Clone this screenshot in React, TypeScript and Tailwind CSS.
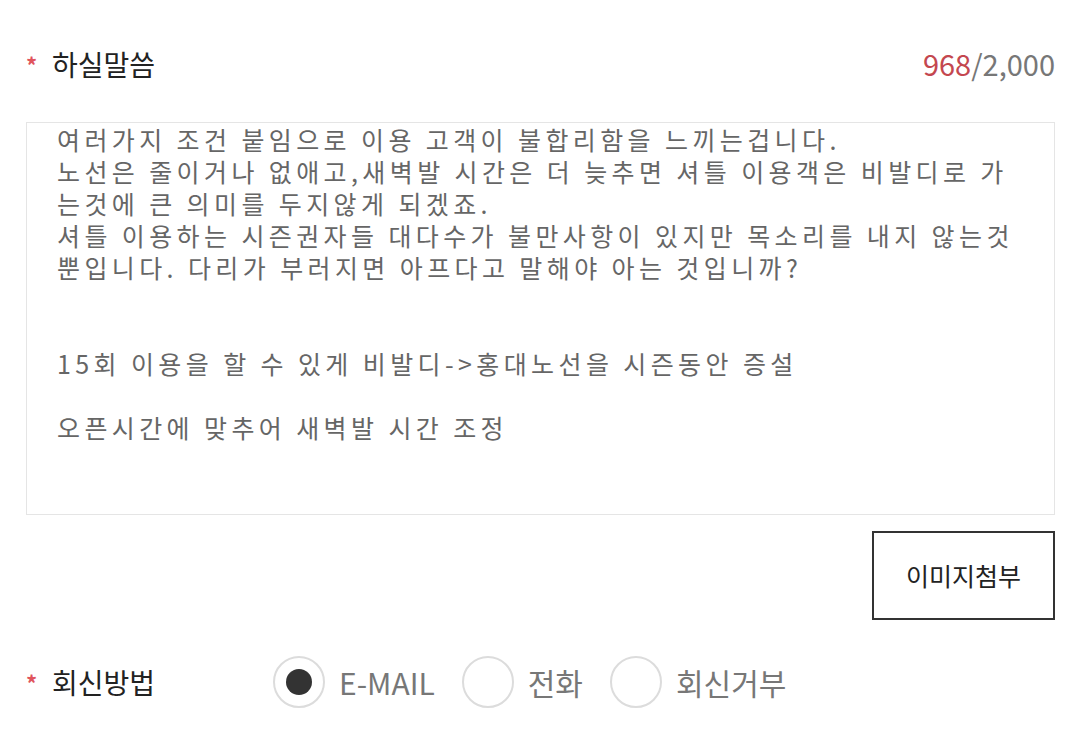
const lines = [
  "여러가지 조건 붙임으로 이용 고객이 불합리함을 느끼는겁니다.",
  "노선은 줄이거나 없애고,새벽발 시간은 더 늦추면 셔틀 이용객은 비발디로 가",
  "는것에 큰 의미를 두지않게 되겠죠.",
  "셔틀 이용하는 시즌권자들 대다수가 불만사항이 있지만 목소리를 내지 않는것",
  "뿐입니다. 다리가 부러지면 아프다고 말해야 아는 것입니까?",
  "",
  "",
  "15회 이용을 할 수 있게 비발디->홍대노선을 시즌동안 증설",
  "",
  "오픈시간에 맞추어 새벽발 시간 조정",
];

function Radio({ label, checked }: { label: string; checked?: boolean }) {
  return (
    <label className="flex items-center">
      <span className="w-[52px] h-[52px] rounded-full border-2 border-[#dcdcdc] flex items-center justify-center">
        {checked && <span className="w-[26px] h-[26px] rounded-full bg-[#333]" />}
      </span>
      <span className="ml-[14px] mr-[27px] text-[30px] text-[#777]">{label}</span>
    </label>
  );
}

export default function App() {
  return (
    <div
      className="w-[1079px] h-[738px] bg-white overflow-hidden pl-[26px] pr-[24px] pt-[44px]"
      style={{ fontFamily: '"Noto Sans CJK KR", "Noto Sans", sans-serif' }}
    >
      <div className="flex items-center justify-between h-[40px]">
        <div className="flex items-center">
          <span className="text-[#e0545c] text-[22px] font-bold w-[26px]">*</span>
          <span className="text-[28px] text-[#222]">하실말씀</span>
        </div>
        <div className="text-[29px] text-[#777]">
          <span className="text-[#c4474f]">968</span>/2,000
        </div>
      </div>

      <div className="mt-[38px] h-[393px] border border-[#e5e5e5] overflow-hidden pl-[30px]">
        <div className="text-[25px] tracking-[4.4px] text-[#666] leading-[32px] whitespace-pre">
          {lines.map((l, i) => (
            <div key={i} className="h-[32px]">{l}</div>
          ))}
        </div>
      </div>

      <div className="flex justify-end mt-[16px]">
        <button className="w-[183px] h-[89px] border-2 border-[#333] text-[25px] text-[#222]">
          이미지첨부
        </button>
      </div>

      <div className="flex items-center mt-[36px]">
        <div className="flex items-center w-[247px]">
          <span className="text-[#e0545c] text-[22px] font-bold w-[26px]">*</span>
          <span className="text-[28px] text-[#222]">회신방법</span>
        </div>
        <Radio label="E-MAIL" checked />
        <Radio label="전화" />
        <Radio label="회신거부" />
      </div>
    </div>
  );
}
